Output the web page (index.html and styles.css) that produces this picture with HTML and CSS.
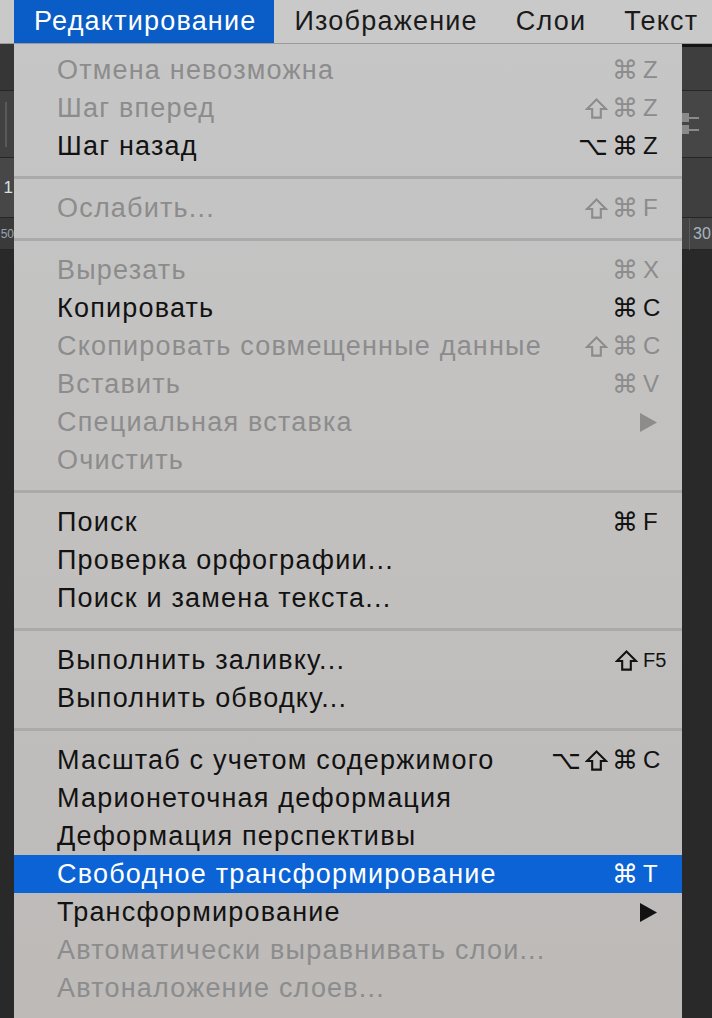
FILE: index.html
```html
<!DOCTYPE html>
<html lang="ru">
<head>
<meta charset="utf-8">
<link rel="stylesheet" href="styles.css">
</head>
<body>
<div class="menubar">
  <div class="mb-item active">Редактирование</div>
  <div class="mb-item">Изображение</div>
  <div class="mb-item">Слои</div>
  <div class="mb-item">Текст</div>
</div>
<div class="stage">
  <div class="side left">
    <div class="band lb1"></div>
    <div class="band lb2"><div class="vline"></div></div>
    <div class="band lb3"><span class="digit">1</span></div>
    <div class="band lb4"><span class="num">50</span></div>
    <div class="band rest"></div>
  </div>
  <div class="dropdown">
    <div class="item dis"><span class="label">Отмена невозможна</span><span class="mods"><span>⌘</span></span><span class="key">Z</span></div>
    <div class="item dis"><span class="label">Шаг вперед</span><span class="mods"><svg class="shift" viewBox="0 0 24 24"><polygon points="12,2.5 22,12.5 16.5,12.5 16.5,21.5 7.5,21.5 7.5,12.5 2,12.5"/></svg><span>⌘</span></span><span class="key">Z</span></div>
    <div class="item"><span class="label">Шаг назад</span><span class="mods"><span>⌥</span><span>⌘</span></span><span class="key">Z</span></div>
    <div class="sep"></div>
    <div class="item dis"><span class="label">Ослабить...</span><span class="mods"><svg class="shift" viewBox="0 0 24 24"><polygon points="12,2.5 22,12.5 16.5,12.5 16.5,21.5 7.5,21.5 7.5,12.5 2,12.5"/></svg><span>⌘</span></span><span class="key">F</span></div>
    <div class="sep"></div>
    <div class="item dis"><span class="label">Вырезать</span><span class="mods"><span>⌘</span></span><span class="key">X</span></div>
    <div class="item"><span class="label">Копировать</span><span class="mods"><span>⌘</span></span><span class="key">C</span></div>
    <div class="item dis"><span class="label">Скопировать совмещенные данные</span><span class="mods"><svg class="shift" viewBox="0 0 24 24"><polygon points="12,2.5 22,12.5 16.5,12.5 16.5,21.5 7.5,21.5 7.5,12.5 2,12.5"/></svg><span>⌘</span></span><span class="key">C</span></div>
    <div class="item dis"><span class="label">Вставить</span><span class="mods"><span>⌘</span></span><span class="key">V</span></div>
    <div class="item dis"><span class="label">Специальная вставка</span><span class="key"><svg class="arrow" viewBox="0 0 17 19" width="17" height="19"><polygon points="0,0 17,9.5 0,19"/></svg></span></div>
    <div class="item dis"><span class="label">Очистить</span></div>
    <div class="sep"></div>
    <div class="item"><span class="label">Поиск</span><span class="mods"><span>⌘</span></span><span class="key">F</span></div>
    <div class="item"><span class="label">Проверка орфографии...</span></div>
    <div class="item"><span class="label">Поиск и замена текста...</span></div>
    <div class="sep"></div>
    <div class="item"><span class="label">Выполнить заливку...</span><span class="mods"><svg class="shift" viewBox="0 0 24 24"><polygon points="12,2.5 22,12.5 16.5,12.5 16.5,21.5 7.5,21.5 7.5,12.5 2,12.5"/></svg></span><span class="key small">F5</span></div>
    <div class="item"><span class="label">Выполнить обводку...</span></div>
    <div class="sep"></div>
    <div class="item"><span class="label">Масштаб с учетом содержимого</span><span class="mods"><span>⌥</span><svg class="shift" viewBox="0 0 24 24"><polygon points="12,2.5 22,12.5 16.5,12.5 16.5,21.5 7.5,21.5 7.5,12.5 2,12.5"/></svg><span>⌘</span></span><span class="key">C</span></div>
    <div class="item"><span class="label">Марионеточная деформация</span></div>
    <div class="item"><span class="label">Деформация перспективы</span></div>
    <div class="item hl"><span class="label">Свободное трансформирование</span><span class="mods"><span>⌘</span></span><span class="key">T</span></div>
    <div class="item"><span class="label">Трансформирование</span><span class="key"><svg class="arrow" viewBox="0 0 17 19" width="17" height="19"><polygon points="0,0 17,9.5 0,19"/></svg></span></div>
    <div class="item dis"><span class="label">Автоматически выравнивать слои...</span></div>
    <div class="item dis"><span class="label">Автоналожение слоев...</span></div>
  </div>
  <div class="side right">
    <div class="band rb0"></div>
    <div class="band rb1"></div>
    <div class="band rb2">
      <div class="knob"><span class="kb"></span><span class="kl"></span></div>
      <div class="knob"><span class="kb"></span><span class="kl"></span></div>
    </div>
    <div class="band rb3"></div>
    <div class="band rb4"><span class="rv"></span><span class="num r">30</span></div>
    <div class="band rest"></div>
  </div>
</div>
</body>
</html>
```

FILE: styles.css
```css
* { box-sizing: border-box; }
html, body { margin: 0; padding: 0; }
body {
  width: 712px;
  height: 1018px;
  overflow: hidden;
  background: #2a2a2a;
  font-family: "Liberation Sans", Arial, sans-serif;
}
.menubar {
  height: 44px;
  background: #c9c9c9;
  border-bottom: 1px solid #9a9a9a;
  display: flex;
  padding-left: 14px;
}
.mb-item {
  height: 43px;
  padding: 0 18px 0 20px;
  font-size: 27px;
  letter-spacing: 1.2px;
  line-height: 43px;
  color: #1a1a1a;
  white-space: nowrap;
}
.mb-item.active {
  background: #0a5cc6;
  color: #fff;
}
.stage {
  display: flex;
  height: 974px;
}
.side {
  display: flex;
  flex-direction: column;
  overflow: hidden;
}
.side.left { width: 14px; }
.side.right { width: 30px; }
.band { flex: none; border-bottom: 1px solid #262626; }
.band.rest { flex: 1; border: none; background: #292929; }
.lb1 { height: 47px; background: #363636; }
.lb2 { height: 67px; background: #414141; padding: 11px 0 0 5px; }
.vline { width: 2px; height: 45px; background: #5a5a5a; }
.lb3 { height: 60px; background: #474747; display: flex; align-items: center; justify-content: flex-end; }
.lb4 { height: 32px; background: #3a3a3a; display: flex; align-items: center; justify-content: flex-end; }
.digit { font-size: 17px; color: #d8e0ea; margin-right: 1px; }
.num { font-size: 12px; color: #9aa4ad; line-height: 1; }
.rb0 { height: 3px; background: #141414; border: none; }
.rb1 { height: 44px; background: #3e3e3e; }
.rb2 { height: 67px; background: #464646; padding-top: 22px; }
.knob { display: flex; align-items: center; height: 9px; margin-bottom: 3px; }
.kb { width: 7px; height: 9px; background: #8a8a8a; }
.kl { width: 10px; height: 2px; background: #8a8a8a; }
.rb3 { height: 60px; background: #3f3f3f; }
.rb4 { height: 32px; background: #444; display: flex; align-items: center; }
.rv { width: 1px; height: 32px; background: #5a5a5a; margin-left: 7px; margin-right: 3px; }
.num.r { font-size: 16px; color: #a7b4c0; }

.dropdown {
  width: 668px;
  background: linear-gradient(#c6c6c6, #bdbab8);
  padding-top: 7px;
  font-size: 27px;
}
.item {
  height: 38px;
  display: flex;
  align-items: center;
  padding: 0 14px 0 43px;
  color: #121212;
  white-space: nowrap;
}
.item.dis { color: #8c8c8c; }
.item.hl { background: #0b63d5; color: #fff; }
.label { flex: 1; letter-spacing: 1.2px; }
.mods {
  display: flex;
  align-items: center;
  gap: 4px;
  font-family: "DejaVu Sans", sans-serif;
  font-size: 26px;
  margin-right: 5px;
}
.shift {
  width: 23px;
  height: 23px;
  fill: none;
  stroke: currentColor;
  stroke-width: 2.2;
  stroke-linejoin: miter;
}
.key {
  width: 25px;
  font-size: 24px;
  display: flex;
  align-items: center;
}
.key.small { font-size: 20px; }
.arrow { display: block; margin-left: -3px; fill: currentColor; }
.sep {
  height: 24px;
  display: flex;
  align-items: center;
}
.sep::before {
  content: "";
  display: block;
  width: 100%;
  height: 3px;
  background: #aaaaaa;
}
```
